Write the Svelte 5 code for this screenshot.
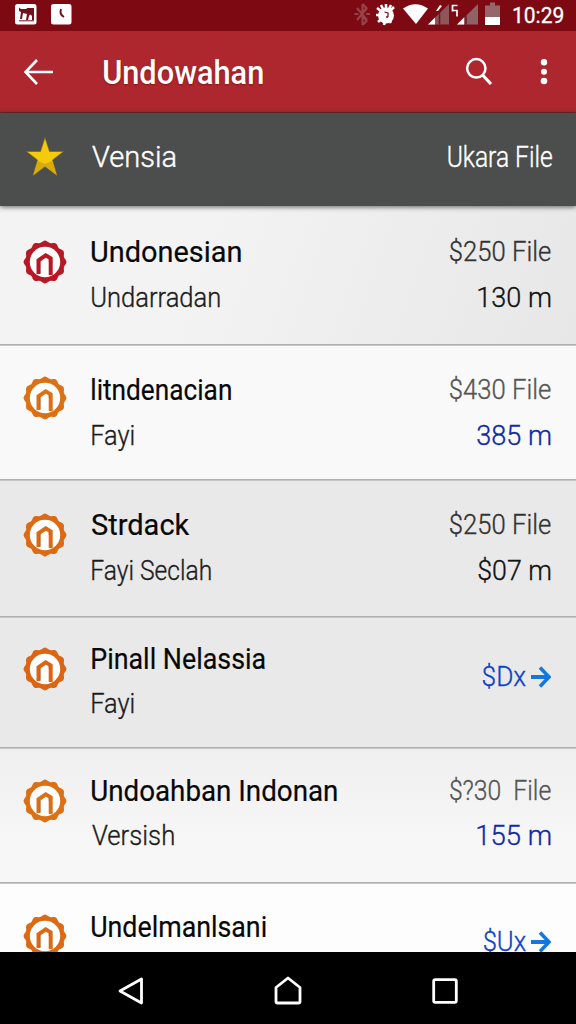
<script lang="ts">
  interface Item {
    title: string;
    sub: string;
    price?: string;
    amount?: string;
    link?: string;
    blue?: boolean;
    muted?: boolean;
    color: string;
    bg: string;
    height: number;
    top: number;
    gap: number;
    badge: number;
    widths: number[];
  }

  const items: Item[] = [
    { title: "Undonesian", sub: "Undarradan", price: "$250 File", amount: "130 m", color: "#b81824", bg: "linear-gradient(110deg, #f3f3f3 35%, #e7e7e7)", height: 139, top: 28, gap: 10, badge: 7, widths: [149, 128, 101, 72] },
    { title: "litndenacian", sub: "Fayi", price: "$430 File", amount: "385 m", blue: true, muted: true, color: "#dc7015", bg: "#f9f9f9", height: 135, top: 27, gap: 10, badge: 5, widths: [139, 42, 101, 73] },
    { title: "Strdack", sub: "Fayi Seclah", price: "$250 File", amount: "$07 m", color: "#dc6914", bg: "#e9e9e9", height: 137, top: 27, gap: 10, badge: 7, widths: [98, 119, 101, 72] },
    { title: "Pinall Nelassia", sub: "Fayi", link: "$Dx", color: "#dc6514", bg: "#e9e9e9", height: 131, top: 24, gap: 9, badge: 7, widths: [173, 42, 43] },
    { title: "Undoahban Indonan", sub: "Versish", price: "$?30  File", amount: "155 m", blue: true, muted: true, color: "#dc7015", bg: "linear-gradient(180deg, #efefef, #f7f7f7 70%)", height: 135, top: 25, gap: 9, badge: 7, widths: [245, 82, 101, 73] },
    { title: "Undelmanlsani", sub: "", link: "$Ux", color: "#dc6914", bg: "#fdfdfd", height: 69, top: 26, gap: 9, badge: 6, widths: [174, 0, 42] }
  ];

  const ctx = document.createElement("canvas").getContext("2d")!;

  // condense a label so that its ink is exactly `width` wide
  function fit(node: HTMLElement, width: number) {
    const style = getComputedStyle(node);
    ctx.font = `${style.fontWeight} ${style.fontSize} ${style.fontFamily}`;
    const m = ctx.measureText(node.textContent ?? "");
    const scale = width / (m.actualBoundingBoxLeft + m.actualBoundingBoxRight);
    const right = node.classList.contains("end");
    const shift = right ? (m.width - m.actualBoundingBoxRight) * scale : m.actualBoundingBoxLeft * scale;
    node.style.transform = `translateX(${shift}px) scaleX(${scale})`;
  }

  // scalloped edge of the badge
  const edge = Array.from({ length: 144 }, (_, i) => {
    const a = (i / 144) * Math.PI * 2;
    const r = 20.5 + 0.9 * Math.cos(a * 12);
    return `${(22 + r * Math.sin(a)).toFixed(2)},${(22 - r * Math.cos(a)).toFixed(2)}`;
  }).join(" ");
</script>

<div class="screen">
  <div class="status">
    <svg class="notices" width="50" height="31" viewBox="0 0 50 31">
      <rect x="0" y="4" width="21.5" height="20.5" rx="2.5" fill="#fff" />
      <path d="M4 7.5l2 1.5h5l1.5-1H19v12h-2v-4q-2-3-3 0l-1 4h-2l1-6-4-1-1 6H5l1-7-2-1z" fill="#74101a" />
      <path d="M4 20.8h15" stroke="#74101a" stroke-width="1" />
      <rect x="36" y="4" width="20.5" height="20.5" rx="2.5" fill="#fff" />
      <path d="M46 9q-2 5 3 8" fill="none" stroke="#74101a" stroke-width="2" />
    </svg>
    <svg class="signals" width="150" height="31" viewBox="352 0 150 31">
      <path d="M362.5 4v21M357 8l10 12M367 8l-10 12M362.5 4l4 4-4 5M362.5 25l4-4-4-6M354.5 14h4M366 14h4" fill="none" stroke="#97414a" stroke-width="2.2" />
      <circle cx="386" cy="15.5" r="8" fill="#fff" />
      <path d="M386 15V4M386 15l5-10M386 15l-5-10M386 15l-9-7M386 15h-10M386 15l-8 7M386 15l8-8M386 15l-2 10M386 15l5 8" stroke="#fff" stroke-width="2.6" />
      <path d="M384.5 12l3.500 1v4M386 17h2" fill="none" stroke="#7b1520" stroke-width="1.3" />
      <path d="M403 8.5Q415.500 0 428 8.500L416 24z" fill="#fff" />
      <path d="M449 4v20.500h-21z" fill="#8f555b" />
      <path d="M435 17.500v7h-7zM436 11l4-6 2 1-4 5z" fill="#fff" />
      <path d="M439.500 13v11.500" stroke="#6a1920" stroke-width="1.500" />
      <path d="M457.500 5.500h-5v5h4.500v6M452.500 10.500v1" fill="none" stroke="#fff" stroke-width="1.700" />
      <path d="M478 4v20.500h-21z" fill="#8f6266" />
      <path d="M464 17.500v7h-7z" fill="#fff" />
      <path d="M466 15.500v9" stroke="#6a1920" stroke-width="1.500" />
      <path d="M490 2.500h5v3h5V18h-15V5.500h5z" fill="#95666a" />
      <path d="M485 17h15v8h-15z" fill="#fff" />
    </svg>
    <span class="time end" use:fit={50}>10:29</span>
  </div>

  <header class="toolbar">
    <svg width="32" height="30" viewBox="0 0 32 30" fill="none" stroke="#fff" stroke-width="2.600">
      <path d="M14 3L2.500 15 14 27M3 15h27" />
    </svg>
    <h1 use:fit={159}>Undowahan</h1>
    <svg class="search" width="30" height="30" viewBox="0 0 30 30" fill="none" stroke="#fff">
      <circle cx="11.300" cy="11.300" r="9.200" stroke-width="2.500" />
      <path d="M17.500 18l8.500 9" stroke-width="3.200" />
    </svg>
    <svg class="more" width="8" height="30" viewBox="0 0 8 30" fill="#fff">
      <circle cx="4" cy="5.300" r="3.200" />
      <circle cx="4" cy="14.800" r="3" />
      <circle cx="4" cy="24" r="3.300" />
    </svg>
  </header>

  <div class="section">
    <svg width="38" height="40" viewBox="0 0 38 40">
      <path d="M19 .5l4.500 14H37.500L26.500 23l4.500 15.500L19 29.500 7 38.500 11.500 23 .5 14.500h14z" fill="#f5c90c" stroke="#7b6918" stroke-width=".7" />
      <path d="M11.700 24L19 27l7.300-3 4.200 14L19 29 7.500 38z" fill="#d8aa0c" />
    </svg>
    <span class="name" use:fit={84}>Vensia</span>
    <span class="kind end" use:fit={104}>Ukara File</span>
  </div>

  <main class="list">
    {#each items as item}
      <div class="row" style="height: {item.height}px; padding-top: {item.top}px; background-image: {item.bg.startsWith('#') ? 'none' : item.bg}; background-color: {item.bg.startsWith('#') ? item.bg : '#f3f3f3'}">
        <svg class="badge" style="margin-top: {item.badge - 1}px" width="44" height="44" viewBox="0 0 44 44">
          <polygon points={edge} fill={item.color} />
          <circle cx="22" cy="22" r="15.200" fill="#fff" />
          <path d="M15.500 34V20.300L22.700 15.300 27.700 18.300V35" fill="none" stroke={item.color} stroke-width="4" />
          <path d="M17.200 21v12M26 19v3" stroke="#611010" stroke-opacity=".25" stroke-width="1" />
        </svg>
        <div class="labels" style="gap: {item.gap}px">
          <span class="title" use:fit={item.widths[0]}>{item.title}</span>
          {#if item.sub}
            <span class="sub" use:fit={item.widths[1]}>{item.sub}</span>
          {/if}
        </div>
        {#if item.link}
          <div class="link">
            <span class="end" use:fit={item.widths[2]}>{item.link}</span>
            <svg width="20" height="22" viewBox="0 0 20 22" fill="none" stroke="#1278e0">
              <path d="M0 11h17" stroke-width="4" />
              <path d="M9 1.500l9 9.500-9 9.500" stroke-width="3.500" />
            </svg>
          </div>
        {:else}
          <div class="values" style="gap: {item.gap}px">
            <span class="price end" class:muted={item.muted} use:fit={item.widths[2]}>{item.price}</span>
            <span class="amount end" class:blue={item.blue} use:fit={item.widths[3]}>{item.amount}</span>
          </div>
        {/if}
      </div>
    {/each}
  </main>

  <nav>
    <svg width="26" height="30" viewBox="0 0 26 30"><path d="M23.500 3v24L2 15z" /></svg>
    <svg width="28" height="30" viewBox="0 0 28 30"><path d="M14 2L26 11.500V25.500q0 1.500-1.500 1.500h-21q-1.500 0-1.500-1.500v-14z" /></svg>
    <svg width="26" height="30" viewBox="0 0 26 30"><rect x="1.700" y="3.700" width="22.600" height="22.600" rx="1.500" /></svg>
  </nav>
</div>

<style>
  :global(body) {
    background: #000;
  }

  .screen {
    width: 576px;
    height: 1024px;
    display: flex;
    flex-direction: column;
    overflow: hidden;
    font-family: Roboto, "Liberation Sans", sans-serif;
    color: #111;
  }

  svg {
    flex: none;
    display: block;
  }

  span,
  h1 {
    transform-origin: left;
    white-space: pre;
  }

  .end {
    transform-origin: right;
  }

  .status {
    flex: none;
    height: 31px;
    box-sizing: border-box;
    padding: 0 13px 0 15px;
    display: flex;
    align-items: center;
    background: #7d0913;
    color: #fff;
  }

  .notices {
    overflow: visible;
  }

  .signals {
    margin-left: auto;
  }

  .time {
    width: 61px;
    text-align: right;
    font-size: 22px;
    line-height: 30px;
    font-weight: 400;
    -webkit-text-stroke: 0.3px #fff;
  }

  .toolbar {
    flex: none;
    height: 82px;
    box-sizing: border-box;
    padding: 1px 28px 0 23px;
    display: flex;
    align-items: center;
    background: #ae272e;
    border-bottom: 1px solid #702b2f;
    color: #fff;
  }

  h1 {
    margin: 2px 0 0 49px;
    font-size: 33px;
    line-height: 40px;
    font-weight: 500;
    text-shadow: 0 1px 2px #6008;
  }

  .search {
    margin-left: auto;
  }

  .more {
    margin-left: 45px;
  }

  .section {
    position: relative;
    flex: none;
    height: 93px;
    box-sizing: border-box;
    padding: 0 24px 5px 26px;
    display: flex;
    align-items: center;
    background: #4c4d4d;
    box-shadow: 0 1px 5px #0009;
    color: #fff;
    font-size: 30px;
    line-height: 36px;
    font-weight: 300;
    -webkit-text-stroke: 0.4px #fff;
  }

  .name {
    margin-left: 28px;
  }

  .kind {
    margin-left: auto;
  }

  .list {
    flex: 1;
    min-height: 0;
    overflow: hidden;
  }

  .row {
    box-sizing: border-box;
    display: flex;
    align-items: flex-start;
    padding-left: 23px;
    padding-right: 25px;
    box-shadow: inset 0 1px #c8c6c7, inset 0 -1px #b0aeaf;
    font-size: 28px;
    line-height: 36px;
    font-weight: 300;
    -webkit-text-stroke: 0.35px currentColor;
  }

  .row:first-child {
    box-shadow: inset 0 -1px #b0aeaf;
  }

  .row:last-child {
    box-shadow: inset 0 1px #c8c6c7;
  }

  .labels {
    display: flex;
    flex-direction: column;
    align-items: flex-start;
    margin-left: 24px;
    padding-left: 0.5px;
  }

  .title {
    font-size: 30px;
    font-weight: 400;
    color: #080808;
    -webkit-text-stroke: 0.2px #080808;
  }

  .sub {
    color: #1c1c1c;
    -webkit-text-stroke-color: #1c1c1c;
  }

  .values {
    margin-left: auto;
    display: flex;
    flex-direction: column;
    align-items: flex-end;
  }

  .price {
    color: #333;
    -webkit-text-stroke-color: #333;
  }

  .price.muted {
    color: #555553;
    -webkit-text-stroke-color: #555553;
  }

  .amount {
    margin-right: 1px;
  }

  .blue {
    color: #1029a6;
    -webkit-text-stroke-color: #1029a6;
  }

  .link {
    margin-top: 18px;
    margin-left: auto;
    display: flex;
    align-items: center;
    gap: 5px;
    color: #0c43cc;
    -webkit-text-stroke-color: #0c43cc;
  }

  .row:last-child .link {
    margin-top: 15px;
  }

  nav {
    flex: none;
    height: 72px;
    box-sizing: border-box;
    padding: 5px 118px 0;
    display: flex;
    align-items: center;
    justify-content: space-between;
    background: #000;
  }

  nav svg {
    fill: none;
    stroke: #fff;
    stroke-width: 2.8;
    stroke-linejoin: round;
  }
</style>
